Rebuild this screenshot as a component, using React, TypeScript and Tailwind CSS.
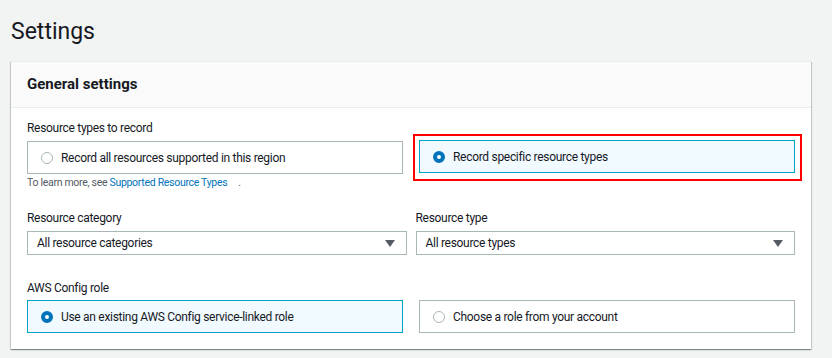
import React from "react";

const font = { fontFamily: "Roboto, 'Liberation Sans', Arial, sans-serif" };

function Radio({ selected }: { selected: boolean }) {
  return selected ? (
    <span className="box-border inline-block h-[12px] w-[12px] shrink-0 rounded-full border-[4px] border-[#0073bb] bg-white" />
  ) : (
    <span className="box-border inline-block h-[12px] w-[12px] shrink-0 rounded-full border border-[#aab7b8] bg-white" />
  );
}

function RadioTile({ label, selected }: { label: string; selected: boolean }) {
  return (
    <div
      className={
        "box-border flex h-[33px] items-center gap-[8px] border pl-[13px] text-[12px] tracking-[-0.3px] text-[#16191f] " +
        (selected ? "border-[#00a1c9] bg-[#f1faff]" : "border-[#aab7b8] bg-white")
      }
    >
      <Radio selected={selected} />
      <span>{label}</span>
    </div>
  );
}

function Select({ value }: { value: string }) {
  return (
    <div className="box-border flex h-[24px] items-center justify-between border border-[#aab7b8] bg-white pl-[9px] pr-[11px] text-[12px] tracking-[-0.3px] text-[#16191f]">
      <span>{value}</span>
      <svg width="10" height="7" viewBox="0 0 10 7">
        <path d="M0 0 L10 0 L5 7 Z" fill="#545b64" />
      </svg>
    </div>
  );
}

export default function App() {
  return (
    <div className="h-[358px] w-full overflow-hidden bg-[#f2f3f3]" style={font}>
      <div className="px-[11px] pt-[18px]">
        <h1 className="text-[23px] leading-[28px] font-normal text-[#16191f]">Settings</h1>
      </div>
      <div className="mt-[15px] ml-[11px] w-[800px] border-t border-[#eaeded] bg-white shadow-[0_1px_1px_0_rgba(0,28,36,0.3),1px_1px_1px_0_rgba(0,28,36,0.15),-1px_1px_1px_0_rgba(0,28,36,0.15)]">
        <div className="box-border flex h-[46px] items-center border-b border-[#eaeded] bg-[#fafafa] px-[16px]">
          <h2 className="text-[15px] font-bold text-[#16191f]">General settings</h2>
        </div>
        <div className="px-[16px] pt-[12px] pb-[16px]">
          <div className="text-[12px] leading-[16px] tracking-[-0.3px] text-[#16191f]">Resource types to record</div>
          <div className="mt-[5px] grid grid-cols-2 gap-[16px]">
            <div>
              <RadioTile label="Record all resources supported in this region" selected={false} />
              <div className="mt-[2px] text-[10.5px] leading-[14px] tracking-[-0.3px] text-[#545b64]">
                To learn more, see <span className="text-[#0073bb]">Supported Resource Types</span>
                <span className="ml-[11px]">.</span>
              </div>
            </div>
            <div className="relative -mt-[1px]">
              <RadioTile label="Record specific resource types" selected={true} />
              <div className="pointer-events-none absolute -top-[6px] -right-[7px] -left-[6px] h-[47px] border-2 border-[#ff0000]" />
            </div>
          </div>
          <div className="mt-[20px] grid grid-cols-2 gap-[9px]">
            <div>
              <div className="text-[12px] leading-[16px] tracking-[-0.3px] text-[#16191f]">Resource category</div>
              <div className="mt-[5px]">
                <Select value="All resource categories" />
              </div>
            </div>
            <div>
              <div className="text-[12px] leading-[16px] tracking-[-0.3px] text-[#16191f]">Resource type</div>
              <div className="mt-[5px]">
                <Select value="All resource types" />
              </div>
            </div>
          </div>
          <div className="mt-[25px] text-[12px] leading-[16px] tracking-[-0.3px] text-[#16191f]">AWS Config role</div>
          <div className="mt-[4px] grid grid-cols-2 gap-[16px]">
            <RadioTile label="Use an existing AWS Config service-linked role" selected={true} />
            <RadioTile label="Choose a role from your account" selected={false} />
          </div>
        </div>
      </div>
    </div>
  );
}
